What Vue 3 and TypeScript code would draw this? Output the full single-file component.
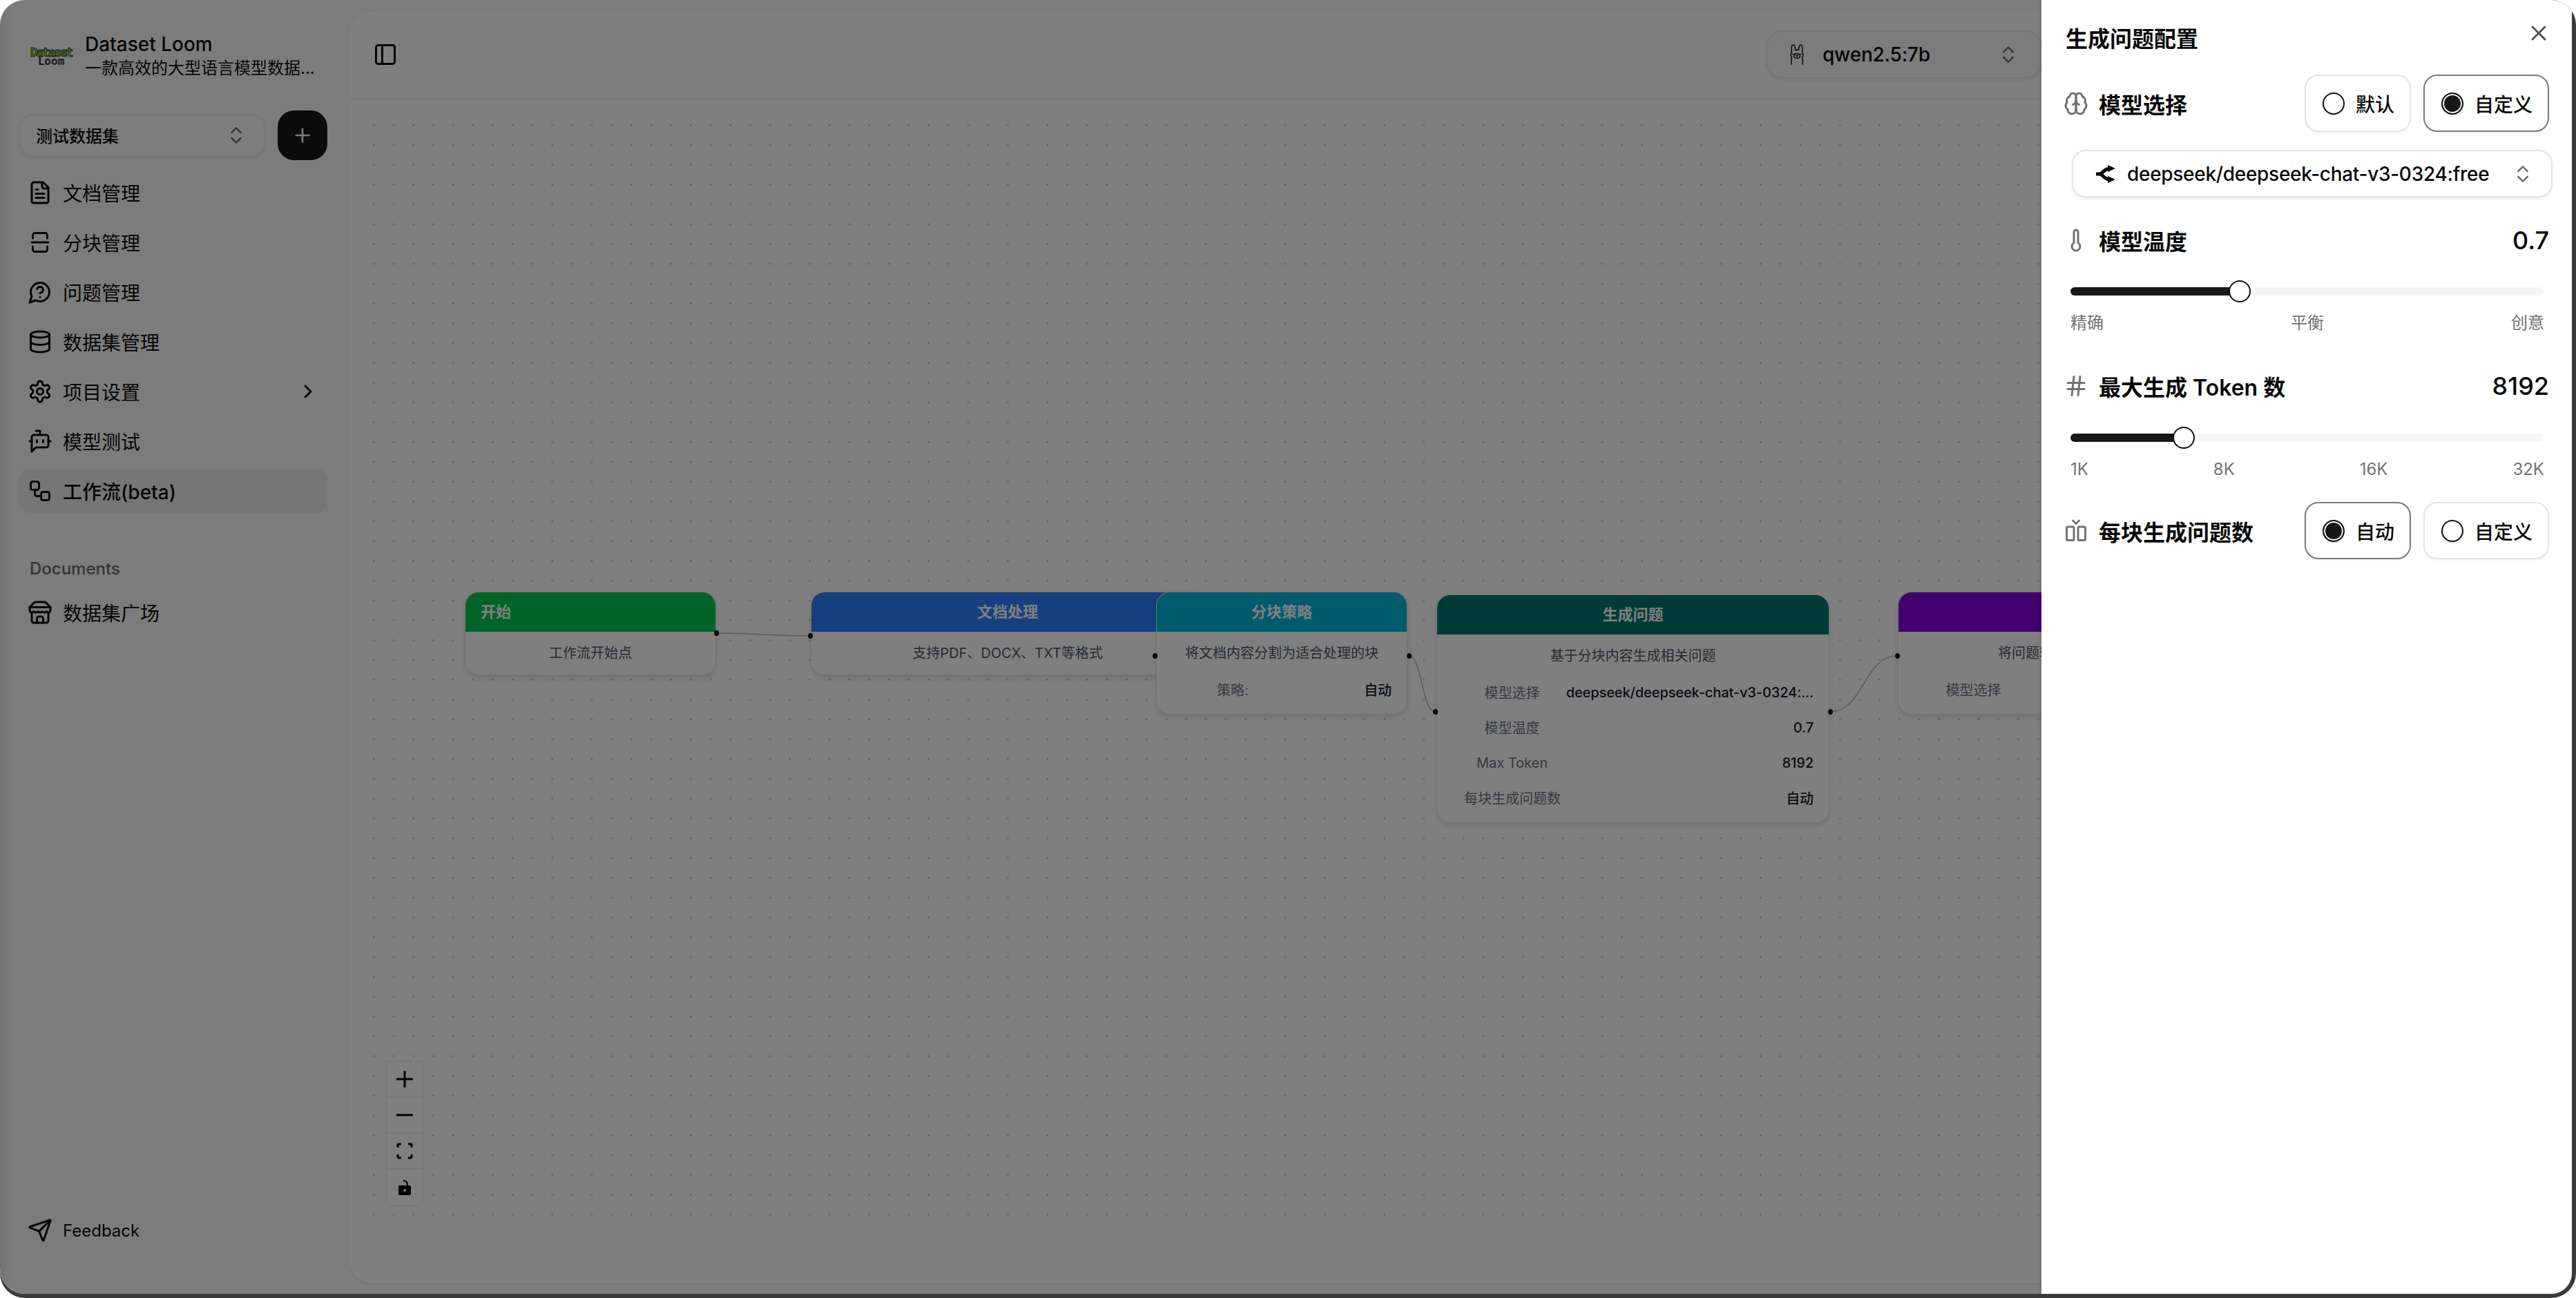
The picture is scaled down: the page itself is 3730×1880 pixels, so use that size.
<script setup lang="ts">
const ORIGIN_X = 506
const ORIGIN_Y = 144

const menu = [
  { label: '文档管理', paths: ['M15 2H6a2 2 0 0 0-2 2v16a2 2 0 0 0 2 2h12a2 2 0 0 0 2-2V7Z', 'M14 2v4a2 2 0 0 0 2 2h4', 'M10 9H8', 'M16 13H8', 'M16 17H8'] },
  { label: '分块管理', paths: ['M5 8V5c0-1 1-2 2-2h10c1 0 2 1 2 2v3', 'M19 16v3c0 1-1 2-2 2H7c-1 0-2-1-2-2v-3', 'M4 12h16'] },
  { label: '问题管理', paths: ['M7.9 20A9 9 0 1 0 4 16.1L2 22Z', 'M9.09 9a3 3 0 0 1 5.83 1c0 2-3 3-3 3', 'M12 17h.01'] },
  { label: '数据集管理', paths: ['M3 5a9 3 0 1 0 18 0a9 3 0 1 0-18 0', 'M3 5V19A9 3 0 0 0 21 19V5', 'M3 12A9 3 0 0 0 21 12'] },
  { label: '项目设置', more: true, paths: ['M12.22 2h-.44a2 2 0 0 0-2 2v.18a2 2 0 0 1-1 1.73l-.43.25a2 2 0 0 1-2 0l-.15-.08a2 2 0 0 0-2.73.73l-.22.38a2 2 0 0 0 .73 2.73l.15.1a2 2 0 0 1 1 1.72v.51a2 2 0 0 1-1 1.74l-.15.09a2 2 0 0 0-.73 2.73l.22.38a2 2 0 0 0 2.73.73l.15-.08a2 2 0 0 1 2 0l.43.25a2 2 0 0 1 1 1.73V20a2 2 0 0 0 2 2h.44a2 2 0 0 0 2-2v-.18a2 2 0 0 1 1-1.73l.43-.25a2 2 0 0 1 2 0l.15.08a2 2 0 0 0 2.73-.73l.22-.39a2 2 0 0 0-.73-2.73l-.15-.08a2 2 0 0 1-1-1.74v-.5a2 2 0 0 1 1-1.74l.15-.09a2 2 0 0 0 .73-2.73l-.22-.38a2 2 0 0 0-2.73-.73l-.15.08a2 2 0 0 1-2 0l-.43-.25a2 2 0 0 1-1-1.73V4a2 2 0 0 0-2-2z', 'M9 12a3 3 0 1 0 6 0a3 3 0 1 0-6 0'] },
  { label: '模型测试', paths: ['M12 6V2H8', 'm8 18-4 4V8a2 2 0 0 1 2-2h12a2 2 0 0 1 2 2v8a2 2 0 0 1-2 2Z', 'M2 12h2', 'M9 11v2', 'M15 11v2', 'M20 12h2'] },
  { label: '工作流(beta)', active: true, paths: ['M5 3h4a2 2 0 0 1 2 2v4a2 2 0 0 1-2 2H5a2 2 0 0 1-2-2V5a2 2 0 0 1 2-2', 'M7 11v4a2 2 0 0 0 2 2h4', 'M15 13h4a2 2 0 0 1 2 2v4a2 2 0 0 1-2 2h-4a2 2 0 0 1-2-2v-4a2 2 0 0 1 2-2'] },
]

const storePaths = [
  'm2 7 4.41-4.41A2 2 0 0 1 7.83 2h8.34a2 2 0 0 1 1.42.59L22 7',
  'M4 12v8a2 2 0 0 0 2 2h12a2 2 0 0 0 2-2v-8',
  'M15 22v-4a2 2 0 0 0-2-2h-2a2 2 0 0 0-2 2v4',
  'M2 7h20',
  'M22 7v3a2 2 0 0 1-2 2a2.7 2.7 0 0 1-1.59-.63.7.7 0 0 0-.82 0A2.7 2.7 0 0 1 16 12a2.7 2.7 0 0 1-1.59-.63.7.7 0 0 0-.82 0A2.7 2.7 0 0 1 12 12a2.7 2.7 0 0 1-1.59-.63.7.7 0 0 0-.82 0A2.7 2.7 0 0 1 8 12a2.7 2.7 0 0 1-1.59-.63.7.7 0 0 0-.82 0A2.7 2.7 0 0 1 4 12a2 2 0 0 1-2-2V7',
]

const nodes = [
  { title: '开始', desc: '工作流开始点', x: 673, y: 857, w: 364, color: '#00c950', left: true, rows: [], pad: 0, labelW: 0 },
  { title: '文档处理', desc: '支持PDF、DOCX、TXT等格式', x: 1174, y: 857, w: 570, color: '#2b7fff', rows: [], pad: 0, labelW: 0 },
  { title: '分块策略', desc: '将文档内容分割为适合处理的块', x: 1674, y: 857, w: 364, color: '#00b8db', pad: 87, labelW: 46, rows: [['策略:', '自动']] },
  {
    title: '生成问题', desc: '基于分块内容生成相关问题', x: 2080, y: 861, w: 569, color: '#00786f', pad: 39, labelW: 139,
    rows: [['模型选择', 'deepseek/deepseek-chat-v3-0324:...'], ['模型温度', '0.7'], ['Max Token', '8192'], ['每块生成问题数', '自动']],
  },
  { title: '数据集生成', desc: '将问题转换为数据集格式并保存', x: 2748, y: 857, w: 570, color: '#8200db', pad: 68, labelW: 81, rows: [['模型选择', '']] },
]

const edges = [
  { x1: 1037, y1: 917, x2: 1173, y2: 921 },
  { x1: 2040, y1: 950, x2: 2078, y2: 1031 },
  { x1: 2650, y1: 1031, x2: 2747, y2: 950 },
]
const handles = [
  [1037, 917], [1173, 921], [1672, 950], [2040, 950], [2078, 1031], [2650, 1031], [2747, 950],
]

function edgePath(e: { x1: number; y1: number; x2: number; y2: number }) {
  const x1 = e.x1 - ORIGIN_X
  const y1 = e.y1 - ORIGIN_Y
  const x2 = e.x2 - ORIGIN_X
  const y2 = e.y2 - ORIGIN_Y
  const mid = (x1 + x2) / 2
  return `M${x1} ${y1}C${mid} ${y1} ${mid} ${y2} ${x2} ${y2}`
}

function nodeStyle(n: { x: number; y: number; w: number }) {
  return { left: `${n.x - ORIGIN_X}px`, top: `${n.y - ORIGIN_Y}px`, width: `${n.w}px` }
}
</script>

<template>
  <div class="window">
    <div class="screen">
      <aside class="sidebar">
        <div class="brand">
          <div class="logo">
            <span class="logo-top">Dataset</span>
            <span class="logo-bottom">Loom</span>
          </div>
          <div class="brand-text">
            <div class="brand-name">Dataset Loom</div>
            <div class="brand-sub">一款高效的大型语言模型数据...</div>
          </div>
        </div>

        <div class="project">
          <div class="project-select">
            <span>测试数据集</span>
            <svg class="chev" viewBox="0 0 24 24"><path d="m7 15 5 5 5-5" /><path d="m7 9 5-5 5 5" /></svg>
          </div>
          <div class="add-btn">
            <svg viewBox="0 0 24 24"><path d="M5 12h14" /><path d="M12 5v14" /></svg>
          </div>
        </div>

        <nav class="menu">
          <div v-for="item in menu" :key="item.label" class="menu-item" :class="{ active: item.active }">
            <svg class="icon" viewBox="0 0 24 24"><path v-for="d in item.paths" :key="d" :d="d" /></svg>
            <span>{{ item.label }}</span>
            <svg v-if="item.more" class="more" viewBox="0 0 24 24"><path d="m9 18 6-6-6-6" /></svg>
          </div>
        </nav>

        <div class="group-label">Documents</div>
        <div class="menu-item">
          <svg class="icon" viewBox="0 0 24 24"><path v-for="d in storePaths" :key="d" :d="d" /></svg>
          <span>数据集广场</span>
        </div>

        <div class="menu-item feedback">
          <svg class="icon" viewBox="0 0 24 24">
            <path d="M14.536 21.686a.5.5 0 0 0 .937-.024l6.5-19a.496.496 0 0 0-.635-.635l-19 6.5a.5.5 0 0 0-.024.937l7.93 3.18a2 2 0 0 1 1.112 1.11z" />
            <path d="m21.854 2.147-10.94 10.939" />
          </svg>
          <span>Feedback</span>
        </div>
      </aside>

      <main class="main">
        <header class="topbar">
          <svg class="icon" viewBox="0 0 24 24"><rect width="18" height="18" x="3" y="3" rx="2" /><path d="M9 3v18" /></svg>
          <div class="model-select">
            <svg class="llama" viewBox="0 0 24 32">
              <path d="M4 30C3 26 4 22 4.500 20 3 18 2.500 15 4.500 12.500 3.500 8 4 2 6.500 2 9 2 9.500 6 9.500 9.500 11 8.800 13 8.800 14.500 9.500 14.500 6 15 2 17.500 2 20 2 20.500 8 19.500 12.500 21.500 15 21 18 19.500 20 20 22 21 26 20 30" />
              <path d="M7.500 18c0-4.400 9-4.400 9 0s-9 4.400-9 0Z" />
              <path d="M11 17.500h2l-1 1.200Z" />
              <path d="M5.800 15.500h.8M17.400 15.500h.8" />
            </svg>
            <span>qwen2.5:7b</span>
            <svg class="chev" viewBox="0 0 24 24"><path d="m7 15 5 5 5-5" /><path d="m7 9 5-5 5 5" /></svg>
          </div>
        </header>

        <div class="canvas">
          <div class="dots" />
          <svg class="edges">
            <path v-for="(e, i) in edges" :key="i" :d="edgePath(e)" />
          </svg>

          <div
            v-for="n in nodes"
            :key="n.title"
            class="node"
            :style="nodeStyle(n)"
          >
            <div class="node-head" :class="{ left: n.left }" :style="{ background: n.color }">{{ n.title }}</div>
            <div class="node-body">
              <div class="node-desc">{{ n.desc }}</div>
              <div
                v-for="r in n.rows"
                :key="r[0]"
                class="node-row"
                :style="{ paddingLeft: `${n.pad}px` }"
              >
                <span class="row-label" :style="{ width: `${n.labelW}px` }">{{ r[0] }}</span>
                <span class="row-value">{{ r[1] }}</span>
              </div>
            </div>
          </div>

          <i
            v-for="(h, i) in handles"
            :key="`h${i}`"
            class="handle"
            :style="{ left: `${h[0] - ORIGIN_X}px`, top: `${h[1] - ORIGIN_Y}px` }"
          />

          <div class="controls">
            <button>
              <svg viewBox="0 0 24 24"><path d="M0 12h24M12 0v24" /></svg>
            </button>
            <button>
              <svg viewBox="0 0 24 24"><path d="M0 12h24" /></svg>
            </button>
            <button>
              <svg viewBox="0 0 24 24"><path d="M7 2H3.500A1.500 1.500 0 0 0 2 3.500V7M17 2h3.500A1.500 1.500 0 0 1 22 3.500V7M7 22H3.500A1.500 1.500 0 0 1 2 20.500V17M17 22h3.500a1.500 1.500 0 0 0 1.500-1.500V17" /></svg>
            </button>
            <button>
              <svg viewBox="0 0 24 24">
                <path d="M10 2c4 0 6 2 6 7" class="shackle" />
                <path class="solid" fill-rule="evenodd" d="M5 9h14a2 2 0 0 1 2 2v10a2 2 0 0 1-2 2H5a2 2 0 0 1-2-2V11a2 2 0 0 1 2-2Zm7 5a2 2 0 1 0 0 4 2 2 0 0 0 0-4Z" />
              </svg>
            </button>
          </div>
        </div>
      </main>

      <div class="overlay" />

      <section class="panel">
        <div class="panel-title">生成问题配置</div>
        <svg class="close" viewBox="0 0 24 24"><path d="M18 6 6 18" /><path d="m6 6 12 12" /></svg>

        <div class="field-row">
          <svg class="field-icon" viewBox="0 0 24 24">
            <path d="M12 5a3 3 0 1 0-5.997.125 4 4 0 0 0-2.526 5.77 4 4 0 0 0 .556 6.588A4 4 0 1 0 12 18Z" />
            <path d="M12 5a3 3 0 1 1 5.997.125 4 4 0 0 1 2.526 5.77 4 4 0 0 1-.556 6.588A4 4 0 1 1 12 18Z" />
            <path d="M15 13a4.500 4.500 0 0 1-3-4 4.500 4.500 0 0 1-3 4" />
            <path d="M12 18V9" />
          </svg>
          <span class="field-label">模型选择</span>
          <div class="radios">
            <div class="radio-card first"><i class="radio" /><span>默认</span></div>
            <div class="radio-card second on"><i class="radio on" /><span>自定义</span></div>
          </div>
        </div>

        <div class="model-box">
          <svg class="router" viewBox="0 0 32 32">
            <path class="router-line" d="M3 16 8 16C13 16 14 9 22 8M8 16C13 16 14 23 22 24" />
            <path class="solid" d="M20 3l11 5-11 5ZM20 19l11 5-11 5Z" />
          </svg>
          <span>deepseek/deepseek-chat-v3-0324:free</span>
          <svg class="chev" viewBox="0 0 24 24"><path d="m7 15 5 5 5-5" /><path d="m7 9 5-5 5 5" /></svg>
        </div>

        <div class="field-row value-row temp-row">
          <svg class="field-icon" viewBox="0 0 24 24"><path d="M14 4v10.540a4 4 0 1 1-4 0V4a2 2 0 0 1 4 0Z" /></svg>
          <span class="field-label">模型温度</span>
          <span class="field-value">0.7</span>
        </div>
        <div class="slider">
          <div class="fill" :style="{ width: '35.7%' }"><i class="thumb" /></div>
        </div>
        <div class="ticks"><span>精确</span><span>平衡</span><span>创意</span></div>

        <div class="field-row value-row token-row">
          <svg class="field-icon" viewBox="0 0 24 24"><path d="M4 9h16M4 15h16M10 3 8 21M16 3l-2 18" /></svg>
          <span class="field-label">最大生成 Token 数</span>
          <span class="field-value">8192</span>
        </div>
        <div class="slider">
          <div class="fill" :style="{ width: '23.9%' }"><i class="thumb" /></div>
        </div>
        <div class="ticks"><span>1K</span><span>8K</span><span>16K</span><span>32K</span></div>

        <div class="field-row count-row">
          <svg class="field-icon" viewBox="0 0 24 24">
            <rect width="7" height="13" x="3" y="8" rx="1" />
            <path d="m15 2-3 3-3-3" />
            <rect width="7" height="13" x="14" y="8" rx="1" />
          </svg>
          <span class="field-label">每块生成问题数</span>
          <div class="radios">
            <div class="radio-card first on"><i class="radio on" /><span>自动</span></div>
            <div class="radio-card second"><i class="radio" /><span>自定义</span></div>
          </div>
        </div>
      </section>
    </div>
  </div>
</template>

<style>
html,
body {
  margin: 0;
  background: #fff;
}
</style>

<style scoped>
.window {
  width: 3730px;
  height: 1880px;
  overflow: hidden;
  border-radius: 36px;
  background: #3a3a3a;
  font-family: Inter, "Noto Sans CJK SC", sans-serif;
  color: #0a0a0a;
}
.screen {
  position: relative;
  display: flex;
  width: 3724px;
  height: 1874px;
  overflow: hidden;
  border-radius: 36px 0 30px 36px;
  background: #fafafa;
}
svg {
  flex: none;
  fill: none;
  stroke: currentColor;
  stroke-width: 2;
  stroke-linecap: round;
  stroke-linejoin: round;
}
.sidebar {
  position: relative;
  display: flex;
  flex: none;
  flex-direction: column;
  box-sizing: border-box;
  width: 506px;
  height: 100%;
  padding: 50px 32px 0 27px;
  background: linear-gradient(90deg, #e8e8e8, #f8f8f8 16px);
}
.brand {
  display: flex;
  align-items: center;
  height: 64px;
  padding-left: 17px;
}
.logo {
  display: flex;
  flex: none;
  flex-direction: column;
  align-items: center;
  width: 60px;
  margin-right: 19px;
  font-family: "DejaVu Sans Mono", monospace;
  font-weight: 700;
  line-height: 13px;
}
.logo-top {
  color: #a8e050;
  font-size: 18px;
  letter-spacing: -2.2px;
  -webkit-text-stroke: 0.8px #1c2a10;
}
.logo-bottom {
  color: #333;
  font-size: 16px;
}
.brand-text {
  min-width: 0;
}
.brand-name {
  font-size: 28px;
  font-weight: 500;
  line-height: 32px;
}
.brand-sub {
  margin-top: 2px;
  font-size: 24px;
  line-height: 34px;
  white-space: nowrap;
}
.project {
  display: flex;
  align-items: center;
  gap: 18px;
  margin-top: 46px;
  margin-left: 1px;
}
.project-select {
  display: flex;
  align-items: center;
  justify-content: space-between;
  box-sizing: border-box;
  width: 356px;
  height: 61px;
  padding: 0 24px 0 22px;
  border: 2px solid #ececec;
  border-radius: 20px;
  background: #fafafa;
  box-shadow: 0 2px 4px rgba(0, 0, 0, 0.06);
  font-size: 24px;
  font-weight: 500;
}
.project-select span {
  margin-top: -2px;
}
.chev {
  width: 32px;
  height: 32px;
  color: #737373;
  stroke-width: 2;
}
.add-btn {
  display: flex;
  flex: none;
  align-items: center;
  justify-content: center;
  width: 72px;
  height: 72px;
  border-radius: 24px;
  background: #171717;
  color: #fafafa;
}
.add-btn svg {
  width: 32px;
  height: 32px;
}
.menu {
  display: flex;
  flex-direction: column;
  gap: 8px;
  margin-top: 15px;
}
.menu-item {
  display: flex;
  align-items: center;
  gap: 15px;
  height: 64px;
  padding: 0 13px;
  border-radius: 16px;
  font-size: 28px;
}
.menu-item.active {
  background: #ededed;
  font-weight: 500;
}
.icon {
  width: 36px;
  height: 36px;
}
.more {
  width: 32px;
  height: 32px;
  margin-left: auto;
  margin-right: -1px;
}
.group-label {
  margin: 65px 0 0 16px;
  height: 32px;
  color: #6a6a6a;
  font-size: 24px;
  font-weight: 500;
  line-height: 32px;
}
.group-label + .menu-item {
  margin-top: 15px;
}
.feedback {
  margin-top: auto;
  margin-bottom: 60px;
  font-size: 24px;
}
.main {
  display: flex;
  flex: 1;
  flex-direction: column;
  height: 1842px;
  margin: 16px 16px 0 0;
  overflow: hidden;
  border-radius: 32px;
  background: #fff;
  box-shadow: 0 1px 4px rgba(0, 0, 0, 0.1);
}
.topbar {
  display: flex;
  flex: none;
  align-items: center;
  justify-content: space-between;
  box-sizing: border-box;
  height: 128px;
  padding: 0 751px 0 34px;
  border-bottom: 2px solid #ececec;
}
.model-select {
  display: flex;
  align-items: center;
  box-sizing: border-box;
  width: 400px;
  height: 70px;
  padding: 0 31px;
  border: 2px solid #ececec;
  border-radius: 24px;
  background: #f9f9f9;
  box-shadow: 0 2px 4px rgba(0, 0, 0, 0.08);
  font-size: 28px;
  font-weight: 500;
  letter-spacing: -0.2px;
}
.model-select span {
  margin-left: 25px;
}
.model-select .chev {
  margin-left: auto;
}
.llama {
  width: 24px;
  height: 32px;
  stroke-width: 1.500;
}
.canvas {
  position: relative;
  flex: 1;
  overflow: hidden;
  background: #fff;
}
.dots {
  position: absolute;
  top: 23.350px;
  right: 0;
  left: 21.350px;
  height: 1607px;
  background-image: radial-gradient(circle, #adadad 0.9px, transparent 1.200px);
  background-size: 28.700px 28.700px;
}
.edges {
  position: absolute;
  top: 0;
  left: 0;
  width: 100%;
  height: 100%;
  stroke: #b1b1b7;
  stroke-width: 1.500;
}
.node {
  position: absolute;
  overflow: hidden;
  box-sizing: border-box;
  border: 1px solid #e5e7eb;
  border-radius: 20px;
  background: #fff;
  box-shadow: 0 4px 8px rgba(0, 0, 0, 0.12);
  font-size: 20px;
}
.node-head {
  height: 57px;
  padding: 0 22px;
  color: #fff;
  font-size: 22px;
  font-weight: 600;
  line-height: 57px;
  text-align: center;
}
.node-head.left {
  text-align: left;
}
.node-body {
  padding: 17px 22px 10px 0;
}
.node-desc {
  height: 28px;
  margin-left: 22px;
  margin-bottom: 13px;
  color: #4a5565;
  font-size: 20px;
  line-height: 28px;
  white-space: nowrap;
  text-align: center;
}
.node-desc:last-child {
  margin-bottom: 7px;
}
.node-row {
  display: flex;
  align-items: center;
  height: 51px;
}
.row-label {
  flex: none;
  color: #6a7282;
  text-align: center;
  white-space: nowrap;
}
.row-value {
  flex: 1;
  color: #101828;
  font-weight: 500;
  letter-spacing: -0.1px;
  text-align: right;
  white-space: nowrap;
}
.handle {
  position: absolute;
  width: 7px;
  height: 8px;
  margin: -4px 0 0 -3px;
  border-radius: 50%;
  background: #111;
}
.controls {
  position: absolute;
  top: 1394px;
  left: 54px;
  display: flex;
  flex-direction: column;
  box-shadow: 0 0 4px rgba(0, 0, 0, 0.15);
}
.controls button {
  display: flex;
  align-items: center;
  justify-content: center;
  box-sizing: border-box;
  width: 52px;
  height: 52px;
  padding: 0;
  border: 0;
  border-bottom: 2px solid #eee;
  background: #fefefe;
  color: #000;
}
.controls button:last-child {
  border-bottom: 0;
}
.controls svg {
  width: 24px;
  height: 24px;
  stroke-width: 3;
  stroke-linecap: butt;
}
.controls .shackle {
  stroke-width: 2;
}
.solid {
  fill: currentColor;
  stroke: none;
}
.overlay {
  position: absolute;
  inset: 0;
  background: rgba(0, 0, 0, 0.5);
}
.panel {
  position: absolute;
  top: 0;
  right: 0;
  bottom: 0;
  box-sizing: border-box;
  width: 768px;
  padding: 37px 33px 0 35px;
  background: #fff;
  box-shadow: -2px 0 6px rgba(0, 0, 0, 0.1);
}
.panel-title {
  font-size: 32px;
  font-weight: 600;
  line-height: 40px;
}
.close {
  position: absolute;
  top: 30px;
  right: 30px;
  width: 36px;
  height: 36px;
  color: #555;
}
.field-row {
  display: flex;
  align-items: center;
}
.field-row:not(.value-row) {
  height: 83px;
}
.panel-title + .close + .field-row {
  margin-top: 31px;
}
.field-icon {
  width: 36px;
  height: 36px;
  margin-left: -3px;
  margin-right: 15px;
  color: #737373;
}
.field-label {
  font-size: 32px;
  font-weight: 600;
  white-space: nowrap;
}
.field-value {
  margin-left: auto;
  font-size: 36px;
  font-weight: 500;
}
.radios {
  display: flex;
  gap: 18px;
  margin-left: auto;
}
.radio-card {
  display: flex;
  align-items: center;
  gap: 16px;
  box-sizing: border-box;
  height: 83px;
  padding: 0 24px;
  border: 2px solid #e5e5e5;
  border-radius: 20px;
  box-shadow: 0 2px 3px rgba(0, 0, 0, 0.05);
  font-size: 28px;
  font-weight: 500;
  white-space: nowrap;
}
.radio-card.first {
  width: 154px;
}
.radio-card.second {
  width: 182px;
}
.radio-card.on {
  border-color: #7a7a7a;
}
.radio {
  display: block;
  flex: none;
  box-sizing: border-box;
  width: 32px;
  height: 32px;
  border: 2px solid #111;
  border-radius: 50%;
  background: #fff;
  box-shadow: 0 2px 3px rgba(0, 0, 0, 0.12);
}
.radio.on {
  background: #171717;
  box-shadow: inset 0 0 0 2px #fff, 0 2px 3px rgba(0, 0, 0, 0.12);
}
.model-box {
  display: flex;
  align-items: center;
  box-sizing: border-box;
  height: 69px;
  margin: 26px -5px 0 9px;
  padding: 0 25px 0 30px;
  border: 2px solid #e5e5e5;
  border-radius: 20px;
  box-shadow: 0 2px 4px rgba(0, 0, 0, 0.08);
  font-size: 28px;
  font-weight: 500;
  letter-spacing: -0.3px;
}
.router {
  width: 32px;
  height: 32px;
  margin-right: 16px;
}
.router-line {
  stroke-width: 5;
  stroke-linecap: butt;
}
.model-box .chev {
  margin-left: auto;
}
.value-row {
  height: 40px;
}
.temp-row {
  margin-top: 42px;
}
.token-row {
  margin-top: 55px;
}
.count-row {
  margin-top: 31px;
}
.slider {
  height: 12px;
  margin: 48px 7px 0;
  border-radius: 6px;
  background: #f5f5f5;
}
.token-row + .slider {
  margin-top: 49px;
}
.fill {
  position: relative;
  height: 100%;
  border-radius: 6px 0 0 6px;
  background: #171717;
}
.thumb {
  position: absolute;
  top: -10px;
  right: -16px;
  box-sizing: border-box;
  width: 32px;
  height: 32px;
  border: 2px solid #111;
  border-radius: 50%;
  background: #fff;
}
.ticks {
  display: flex;
  justify-content: space-between;
  height: 32px;
  margin: 24px 7px 0;
  color: #737373;
  font-size: 24px;
  line-height: 32px;
}
</style>
